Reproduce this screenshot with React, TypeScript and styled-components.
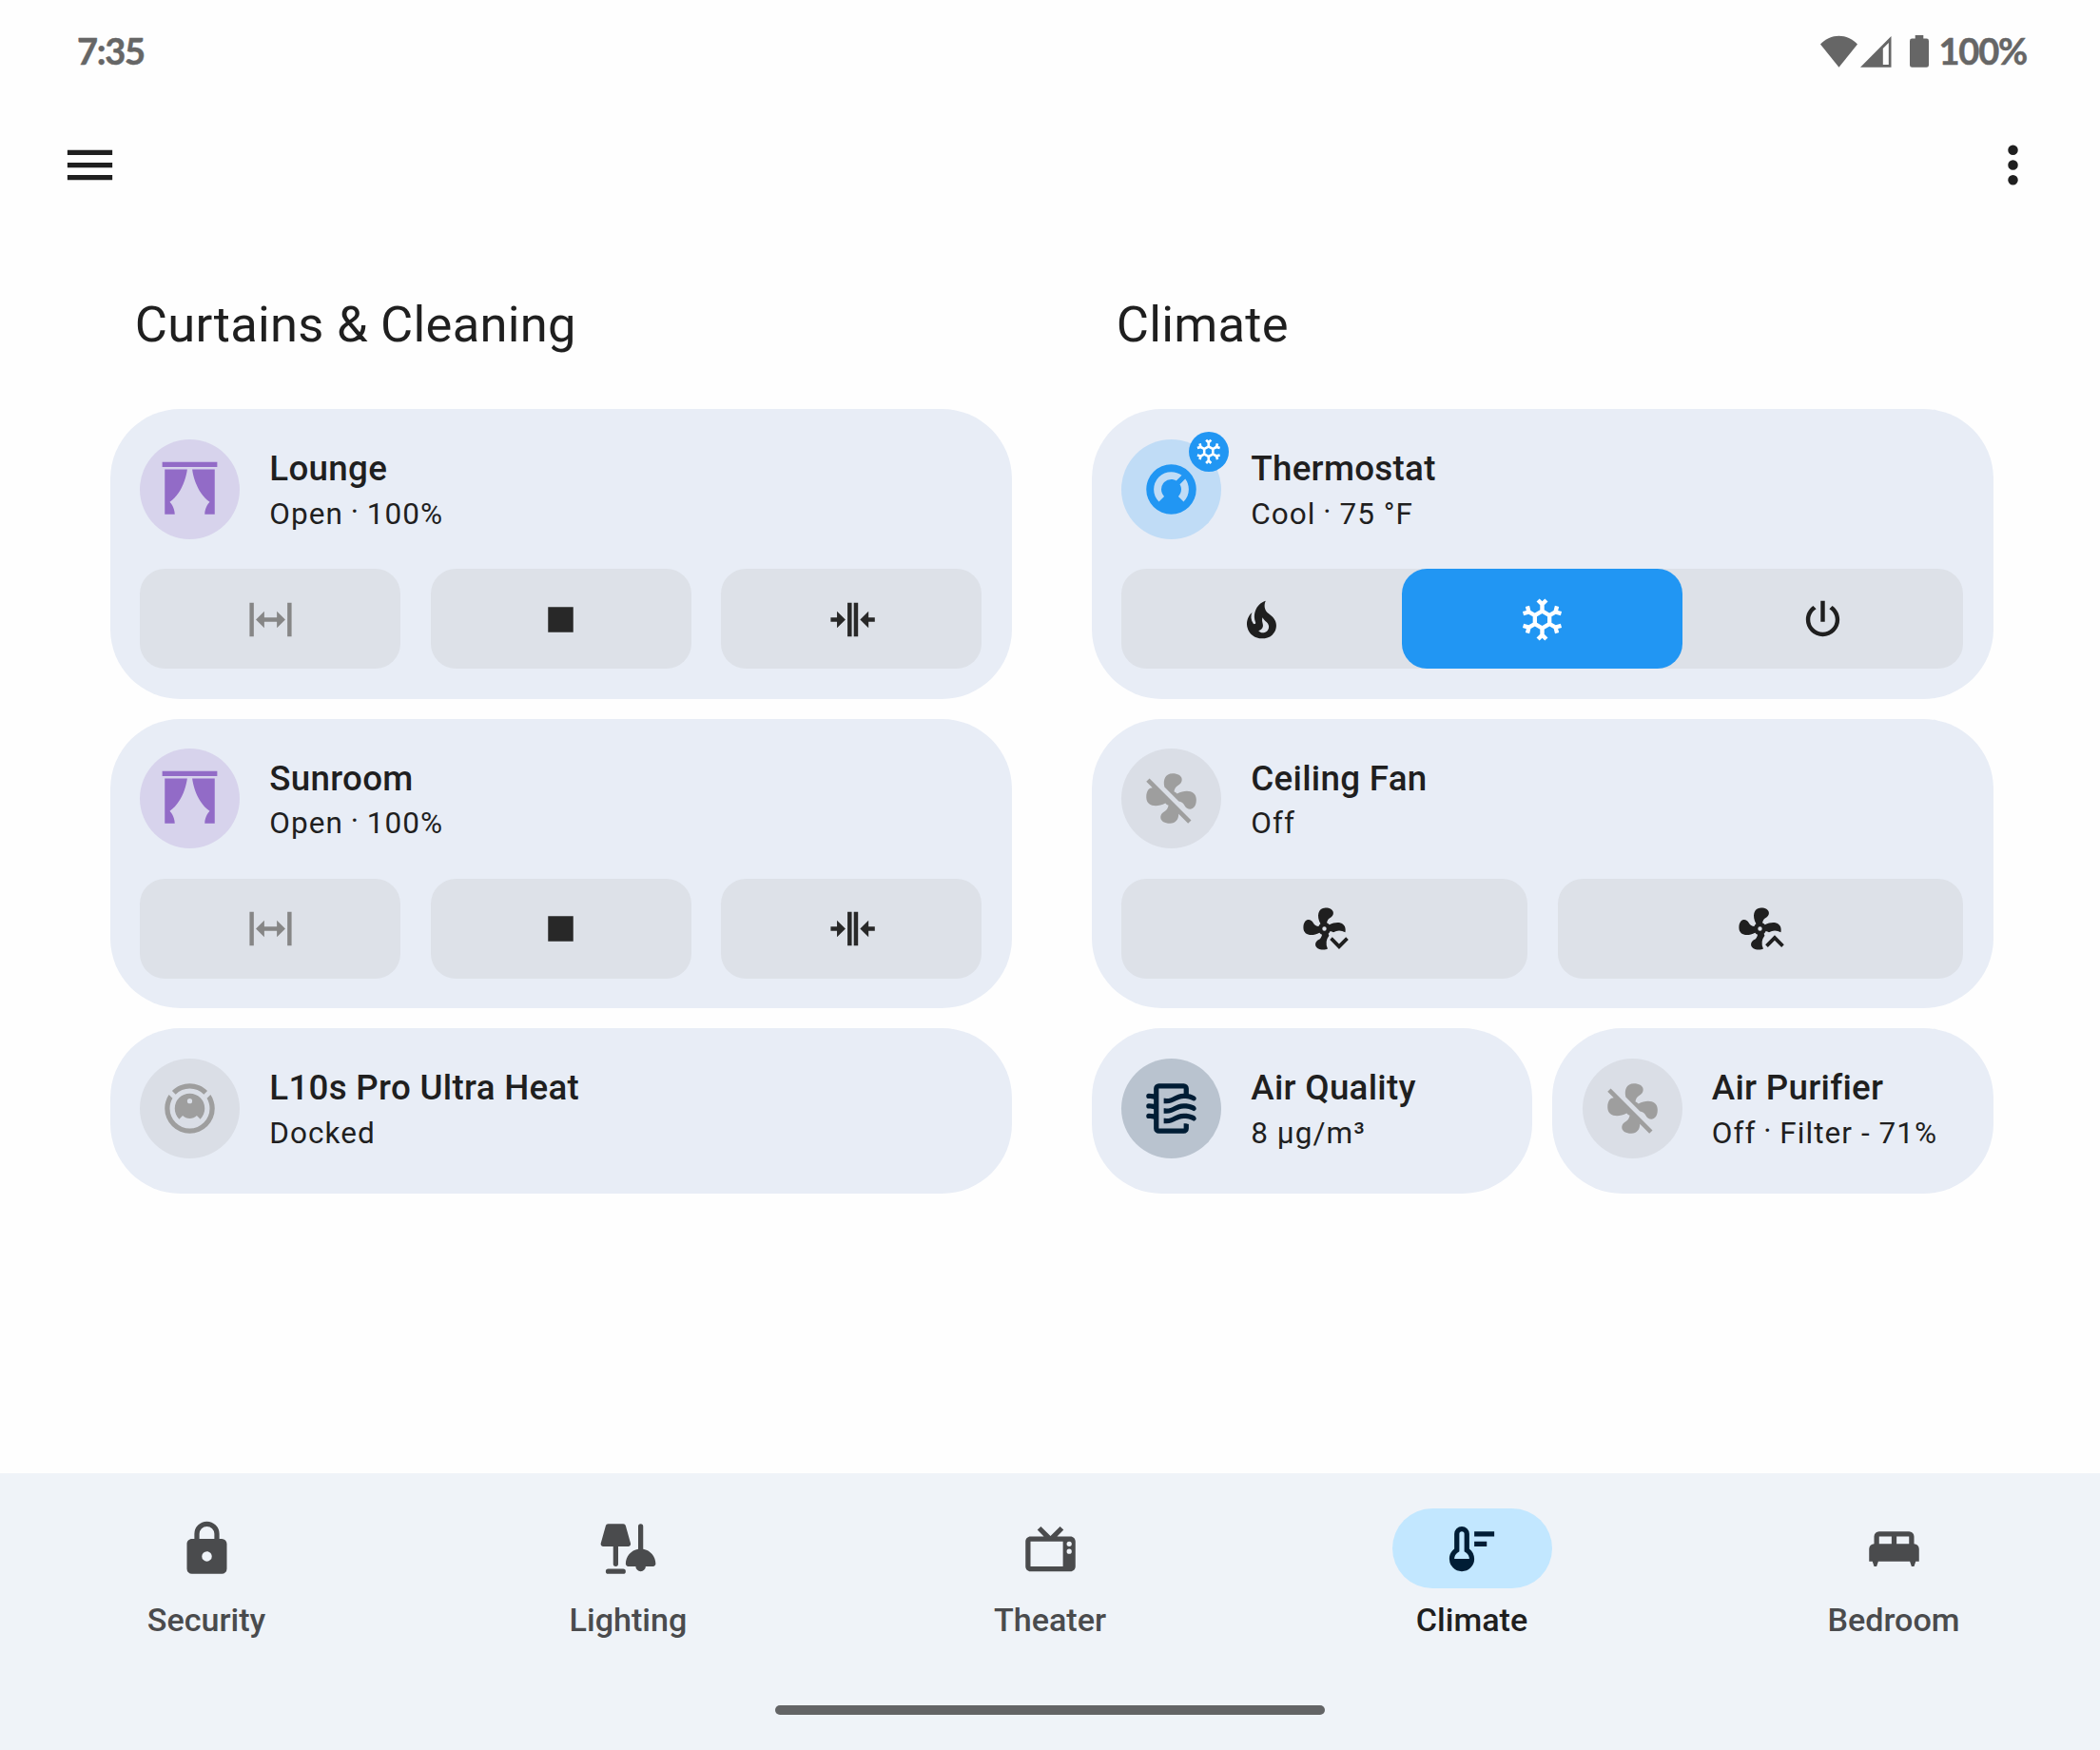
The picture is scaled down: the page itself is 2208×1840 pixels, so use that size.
import React from 'react';
import styled, { createGlobalStyle } from 'styled-components';

const GlobalStyle = createGlobalStyle`
  * { box-sizing: border-box; }
  html, body { margin: 0; padding: 0; background: #fefefe; }
  body { font-family: Roboto, "Noto Sans", sans-serif; color: #1f1f1f; }
  button { font: inherit; color: inherit; border: 0; padding: 0; margin: 0; background: none; }
`;

/* ---------- icon paths, 24 x 24 grid ---------- */

const icons = {
  menu: 'M3,6H21V8H3V6M3,11H21V13H3V11M3,16H21V18H3V16Z',
  dots: 'M12,16A2,2 0 0,1 14,18A2,2 0 0,1 12,20A2,2 0 0,1 10,18A2,2 0 0,1 12,16M12,10A2,2 0 0,1 14,12A2,2 0 0,1 12,14A2,2 0 0,1 10,12A2,2 0 0,1 12,10M12,4A2,2 0 0,1 14,6A2,2 0 0,1 12,8A2,2 0 0,1 10,6A2,2 0 0,1 12,4Z',
  curtains: 'M23 3H1V1H23V3M2 22H6C6 19 4 17 4 17C10 13 11 4 11 4H2V22M22 4H13C13 4 14 13 20 17C20 17 18 19 18 22H22V4Z',
  expand: 'M9,11H15V8L19,12L15,16V13H9V16L5,12L9,8V11M2,20V4H4V20H2M20,20V4H22V20H20Z',
  collapse: 'M13,20V4H15.03V20H13M10,20V4H12.03V20H10M5,8L9.03,12L5,16V13H2V11H5V8M20,16L16,12L20,8V11H23V13H20V16Z',
  stop: 'M18,18H6V6H18V18Z',
  fire: 'M17.66 11.2C17.43 10.9 17.15 10.64 16.89 10.38C16.22 9.78 15.46 9.35 14.82 8.72C13.33 7.26 13 4.85 13.95 3C13 3.23 12.17 3.75 11.46 4.32C8.87 6.4 7.85 10.07 9.07 13.22C9.11 13.32 9.15 13.42 9.15 13.55C9.15 13.77 9 13.97 8.8 14.05C8.57 14.15 8.33 14.09 8.14 13.93C8.08 13.88 8.04 13.83 8 13.76C6.87 12.33 6.69 10.28 7.45 8.64C5.78 10 4.87 12.3 5 14.47C5.06 14.97 5.12 15.47 5.29 15.97C5.43 16.57 5.7 17.17 6 17.7C7.08 19.43 8.95 20.67 10.96 20.92C13.1 21.19 15.39 20.8 17.03 19.32C18.86 17.66 19.5 15 18.56 12.72L18.43 12.46C18.22 12 17.66 11.2 17.66 11.2M14.5 17.5C14.22 17.74 13.76 18 13.4 18.1C12.28 18.5 11.16 17.94 10.5 17.28C11.69 17 12.4 16.12 12.61 15.23C12.78 14.43 12.46 13.77 12.33 13C12.21 12.26 12.23 11.63 12.5 10.94C12.69 11.32 12.89 11.7 13.13 12C13.9 13 15.11 13.44 15.37 14.8C15.41 14.94 15.43 15.08 15.43 15.23C15.46 16.05 15.1 16.95 14.5 17.5H14.5Z',
  snowflake: 'M20.79,13.95L18.46,14.57L16.46,13.44V10.56L18.46,9.43L20.79,10.05L21.31,8.12L19.54,7.65L20,5.88L18.07,5.36L17.45,7.69L15.45,8.82L13,7.38V5.12L14.71,3.41L13.29,2L12,3.29L10.71,2L9.29,3.41L11,5.12V7.38L8.5,8.82L6.5,7.69L5.92,5.36L4,5.88L4.47,7.65L2.7,8.12L3.22,10.05L5.55,9.43L7.55,10.56V13.45L5.55,14.58L3.22,13.96L2.7,15.89L4.47,16.36L4,18.12L5.93,18.64L6.55,16.31L8.55,15.18L11,16.62V18.88L9.29,20.59L10.71,22L12,20.71L13.29,22L14.7,20.59L13,18.88V16.62L15.5,15.17L17.5,16.3L18.12,18.63L20,18.12L19.53,16.35L21.3,15.88L20.79,13.95M9.5,10.56L12,9.11L14.5,10.56V13.44L12,14.89L9.5,13.44V10.56Z',
  power: 'M16.56,5.44L15.11,6.89C16.84,7.94 18,9.83 18,12A6,6 0 0,1 12,18A6,6 0 0,1 6,12C6,9.83 7.16,7.94 8.88,6.88L7.44,5.44C5.36,6.88 4,9.28 4,12A8,8 0 0,0 12,20A8,8 0 0,0 20,12C20,9.28 18.64,6.88 16.56,5.44M13,3H11V13H13',
  thermostat: 'M16.95,16.95L14.83,14.83C15.55,14.1 16,13.1 16,12C16,11.26 15.79,10.57 15.43,10L17.6,7.81C18.5,9 19,10.43 19,12C19,13.93 18.22,15.68 16.95,16.95M12,5C13.57,5 15,5.5 16.19,6.4L14,8.56C13.43,8.21 12.74,8 12,8A4,4 0 0,0 8,12C8,13.1 8.45,14.1 9.17,14.83L7.05,16.95C5.78,15.68 5,13.93 5,12A7,7 0 0,1 12,5M12,2A10,10 0 0,0 2,12A10,10 0 0,0 12,22A10,10 0 0,0 22,12A10,10 0 0,0 12,2Z',
  fanOff: 'M12.5,2C9.64,2 8.57,4.55 9.29,7.47L15,13.16C15.87,13.37 16.81,13.81 17.28,14.73C18.46,17.1 22.03,17 22.03,12.5C22.03,8.92 18.05,8.13 14.35,10.13C14.03,9.73 13.61,9.42 13.13,9.22C13.32,8.29 13.76,7.24 14.75,6.75C17.11,5.57 17,2 12.5,2M3.28,4L2,5.27L4.47,7.73C3.22,7.74 2,8.87 2,11.5C2,15.07 5.96,15.85 9.65,13.87C9.97,14.27 10.4,14.59 10.89,14.79C10.69,15.71 10.25,16.75 9.27,17.24C6.91,18.42 7,22 11.5,22C13.8,22 14.94,20.36 14.94,18.21L18.73,22L20,20.72L3.28,4Z',
  fanDown: 'M12,11A1,1 0 0,0 11,12A1,1 0 0,0 12,13A1,1 0 0,0 13,12A1,1 0 0,0 12,11M12.5,2C17,2 17.11,5.57 14.75,6.75C13.76,7.24 13.32,8.29 13.13,9.22C13.61,9.42 14.03,9.73 14.35,10.13C18.05,8.13 22.03,8.92 22.03,12.5C22.03,12.95 22,13.35 21.92,13.75A6,6 0 0,0 16.3,13.65C15.8,13.37 15.3,13.2 14.79,13.11C14.59,13.59 14.28,14 13.88,14.34C14,14.6 14.1,14.9 14.22,15.3A6,6 0 0,0 13.55,21.5C13.05,21.82 12.4,22 11.5,22C7,22 6.91,18.42 9.27,17.24C10.25,16.75 10.69,15.71 10.89,14.79C10.4,14.59 9.97,14.27 9.65,13.87C5.96,15.85 2,15.07 2,11.5C2,7 5.56,6.89 6.74,9.26C7.24,10.25 8.29,10.68 9.22,10.87C9.41,10.39 9.73,9.97 10.14,9.65C8.15,5.96 8.94,2 12.5,2M14.6,17.2L15.76,15.98L19,19.2L22.26,15.98L23.45,17.2L19,21.75Z',
  fanUp: 'M12,11A1,1 0 0,0 11,12A1,1 0 0,0 12,13A1,1 0 0,0 13,12A1,1 0 0,0 12,11M12.5,2C17,2 17.11,5.57 14.75,6.75C13.76,7.24 13.32,8.29 13.13,9.22C13.61,9.42 14.03,9.73 14.35,10.13C18.05,8.13 22.03,8.92 22.03,12.5C22.03,12.95 22,13.35 21.92,13.75A6,6 0 0,0 16.3,13.65C15.8,13.37 15.3,13.2 14.79,13.11C14.59,13.59 14.28,14 13.88,14.34C14,14.6 14.1,14.9 14.22,15.3A6,6 0 0,0 13.55,21.5C13.05,21.82 12.4,22 11.5,22C7,22 6.91,18.42 9.27,17.24C10.25,16.75 10.69,15.71 10.89,14.79C10.4,14.59 9.97,14.27 9.65,13.87C5.96,15.85 2,15.07 2,11.5C2,7 5.56,6.89 6.74,9.26C7.24,10.25 8.29,10.68 9.22,10.87C9.41,10.39 9.73,9.97 10.14,9.65C8.15,5.96 8.94,2 12.5,2M14.55,19.6L15.74,20.85L19,17.6L22.26,20.85L23.45,19.6L19,15Z',
  vacuum: 'M12,2C14.65,2 17.19,3.06 19.07,4.93L17.65,6.35C16.15,4.85 14.12,4 12,4C9.88,4 7.84,4.84 6.35,6.35L4.93,4.93C6.81,3.06 9.35,2 12,2M3.66,6.5L5.11,7.94C4.39,9.17 4,10.57 4,12A8,8 0 0,0 12,20A8,8 0 0,0 20,12C20,10.57 19.61,9.17 18.88,7.94L20.34,6.5C21.42,8.12 22,10.04 22,12A10,10 0 0,1 12,22A10,10 0 0,1 2,12C2,10.04 2.58,8.12 3.66,6.5M12,6A6,6 0 0,1 18,12C18,13.59 17.37,15.12 16.24,16.24L14.83,14.83C14.08,15.58 13.06,16 12,16C10.94,16 9.92,15.58 9.17,14.83L7.76,16.24C6.63,15.12 6,13.59 6,12A6,6 0 0,1 12,6M12,8A1,1 0 0,0 11,9A1,1 0 0,0 12,10A1,1 0 0,0 13,9A1,1 0 0,0 12,8Z',
  airFilter: 'M19,18.31V20A2,2 0 0,1 17,22H7A2,2 0 0,1 5,20V16.3C4.54,16.12 3.95,16 3,16A1,1 0 0,1 2,15A1,1 0 0,1 3,14C3.82,14 4.47,14.08 5,14.21V12.3C4.54,12.12 3.95,12 3,12A1,1 0 0,1 2,11A1,1 0 0,1 3,10C3.82,10 4.47,10.08 5,10.21V8.3C4.54,8.12 3.95,8 3,8A1,1 0 0,1 2,7A1,1 0 0,1 3,6C3.82,6 4.47,6.08 5,6.21V4A2,2 0 0,1 7,2H17A2,2 0 0,1 19,4V6.16C20.78,6.47 21.54,7.13 21.71,7.29C22.1,7.68 22.1,8.32 21.71,8.71C21.32,9.1 20.8,9.09 20.29,8.71V8.71C20.29,8.71 19.25,8 17,8C15.74,8 14.91,8.41 13.95,8.9C12.91,9.41 11.74,10 10,10C9.64,10 9.31,10 9,9.96V7.95C9.3,8 9.63,8 10,8C11.26,8 12.09,7.59 13.05,7.11C14.09,6.59 15.27,6 17,6V4H7V20H17V18C18.5,18 18.97,18.29 19,18.31M17,10C15.27,10 14.09,10.59 13.05,11.11C12.09,11.59 11.26,12 10,12C9.63,12 9.3,12 9,11.95V13.96C9.31,14 9.64,14 10,14C11.74,14 12.91,13.41 13.95,12.9C14.91,12.42 15.74,12 17,12C19.25,12 20.29,12.71 20.29,12.71V12.71C20.8,13.1 21.32,13.1 21.71,12.71C22.1,12.32 22.1,11.69 21.71,11.29C21.5,11.08 20.25,10 17,10M17,14C15.27,14 14.09,14.59 13.05,15.11C12.09,15.59 11.26,16 10,16C9.63,16 9.3,16 9,15.95V17.96C9.31,18 9.64,18 10,18C11.74,18 12.91,17.41 13.95,16.9C14.91,16.42 15.74,16 17,16C19.25,16 20.29,16.71 20.29,16.71V16.71C20.8,17.1 21.32,17.1 21.71,16.71C22.1,16.32 22.1,15.69 21.71,15.29C21.5,15.08 20.25,14 17,14Z',
  lock: 'M12,17A2,2 0 0,0 14,15C14,13.89 13.1,13 12,13A2,2 0 0,0 10,15A2,2 0 0,0 12,17M18,8A2,2 0 0,1 20,10V20A2,2 0 0,1 18,22H6A2,2 0 0,1 4,20V10C4,8.89 4.9,8 6,8H7V6A5,5 0 0,1 12,1A5,5 0 0,1 17,6V8H18M12,3A3,3 0 0,0 9,6V8H15V6A3,3 0 0,0 12,3Z',
  lamps: 'M4,2H10C10.5,2 10.88,2.3 11,2.78L12.97,9.8C13.13,10.42 12.65,11 12,11H8V18A1,1 0 0,1 6,18V11H2C1.35,11 0.87,10.42 1.03,9.8L3,2.78C3.12,2.3 3.5,2 4,2M4,20H10A1,1 0 0,1 10,22H4A1,1 0 0,1 4,20M17,2A1,1 0 0,1 18,3V12.08C20.84,12.56 23,15.03 23,18C23,18.55 22.55,19 22,19H19A2,2 0 0,1 15,19H12C11.45,19 11,18.55 11,18C11,15.03 13.16,12.56 16,12.08V3A1,1 0 0,1 17,2Z',
  tv: 'M8.16,3L6.75,4.41L9.34,7H4C2.89,7 2,7.89 2,9V19C2,20.11 2.89,21 4,21H20C21.11,21 22,20.11 22,19V9C22,7.89 21.11,7 20,7H14.66L17.25,4.41L15.84,3L12,6.84L8.16,3M4,9H17V19H4V9M19.5,9A1,1 0 0,1 20.5,10A1,1 0 0,1 19.5,11A1,1 0 0,1 18.5,10A1,1 0 0,1 19.5,9M19.5,12A1,1 0 0,1 20.5,13A1,1 0 0,1 19.5,14A1,1 0 0,1 18.5,13A1,1 0 0,1 19.5,12Z',
  thermometer: 'M13,5H21V7H13V5M13,9H18V11H13V9M11,12V6A3,3 0 0,0 5,6V12C3.79,12.91 3,14.37 3,16A5,5 0 0,0 13,16C13,14.37 12.21,12.91 11,12M5,16C5,15.06 5.45,14.16 6.2,13.6L7,13V6A1,1 0 0,1 9,6V13L9.8,13.6C10.55,14.17 11,15.06 11,16H5Z',
  bed: 'M20,10V7A2,2 0 0,0 18,5H6A2,2 0 0,0 4,7V10A2,2 0 0,0 2,12V17H3.33L4,19H5L5.67,17H18.33L19,19H20L20.67,17H22V12A2,2 0 0,0 20,10M11,10H6V7H11M18,10H13V7H18',
};

type IconName = keyof typeof icons;

const Glyph = styled.svg<{ $size: number }>`
  display: block;
  flex: none;
  width: ${(p) => p.$size}px;
  height: ${(p) => p.$size}px;
  fill: currentColor;
`;

const Icon = ({ name, size = 63 }: { name: IconName; size?: number }) => (
  <Glyph $size={size} viewBox="0 0 24 24" aria-hidden>
    <path fillRule="evenodd" d={icons[name]} />
  </Glyph>
);

/* ---------- page frame ---------- */

const Screen = styled.div`
  display: flex;
  flex-direction: column;
  width: 2208px;
  height: 1840px;
  overflow: hidden;
  background: #fefefe;
`;

const StatusBar = styled.header`
  display: flex;
  align-items: center;
  justify-content: space-between;
  height: 108px;
  padding: 0 77px 0 81px;
  color: #666;
  font: 700 38px/44px Lato, sans-serif;
`;

const Clock = styled.span`
  padding-bottom: 2px;
  letter-spacing: -1.3px;
  -webkit-text-stroke: 0.5px currentColor;
`;

const StatusIcons = styled.div`
  display: flex;
  align-items: center;
`;

const StatusGlyph = styled.svg<{ $gap: number }>`
  display: block;
  height: 34px;
  fill: currentColor;
  margin-right: ${(p) => p.$gap}px;
`;

const Battery = styled.span`
  padding-bottom: 2px;
  letter-spacing: -1.2px;
  -webkit-text-stroke: 0.5px currentColor;
`;

const AppBar = styled.div`
  display: flex;
  align-items: center;
  justify-content: space-between;
  height: 131px;
  padding: 0 60px 0 63px;
`;

const IconButton = styled.button`
  display: block;
`;

const Main = styled.main`
  flex: 1;
  display: flex;
  gap: 84px;
  padding: 60px 112.25px 0 115.75px;
`;

const Section = styled.section`
  display: flex;
  flex-direction: column;
  width: 948px;
`;

const SectionTitle = styled.h2`
  margin: 0;
  height: 131.25px;
  padding: 10px 26px 0;
  font-weight: 400;
  font-size: 52.5px;
  line-height: 64px;
  letter-spacing: 0.26px;
  white-space: nowrap;
`;

const Stack = styled.div`
  display: flex;
  flex-direction: column;
  gap: 21px;
`;

const Split = styled.div`
  display: grid;
  grid-template-columns: 1fr 1fr;
  gap: 21px;
`;

/* ---------- tiles ---------- */

const Card = styled.article<{ $compact?: boolean }>`
  display: flex;
  flex-direction: column;
  gap: 31.5px;
  height: ${(p) => (p.$compact ? 173.5 : 304.5)}px;
  padding: 31.5px;
  border-radius: 73.5px;
  background: #e8edf6;
`;

const CardHead = styled.div`
  display: flex;
  align-items: center;
  gap: 31px;
  height: 105px;
`;

const Avatar = styled.div<{ $fg: string; $bg: string }>`
  position: relative;
  display: grid;
  place-items: center;
  flex: none;
  width: 105px;
  height: 105px;
  border-radius: 50%;
  color: ${(p) => p.$fg};
  background: ${(p) => p.$bg};
`;

const Badge = styled.span`
  position: absolute;
  top: -7.875px;
  right: -7.875px;
  display: grid;
  place-items: center;
  width: 42px;
  height: 42px;
  border-radius: 50%;
  color: #fff;
  background: #2196f3;
`;

const Labels = styled.div`
  display: flex;
  flex-direction: column;
  white-space: nowrap;
`;

const Name = styled.span`
  font-weight: 500;
  font-size: 36.75px;
  line-height: 52.5px;
  letter-spacing: 0.29px;
`;

const State = styled.span`
  font-size: 31.5px;
  line-height: 42px;
  letter-spacing: 1.05px;
`;

const ButtonRow = styled.div`
  display: flex;
  gap: 31.5px;
`;

const controlColors = { normal: '#1f1f1f', soft: '#282828', disabled: '#868686' };

const ControlButton = styled.button<{ $tone?: keyof typeof controlColors }>`
  display: grid;
  place-items: center;
  flex: 1;
  height: 105px;
  padding-top: 0.6px;
  border-radius: 26.25px;
  background: #dde1e8;
  color: ${(p) => controlColors[p.$tone ?? 'normal']};
`;

const Segmented = styled.div`
  display: flex;
  height: 105px;
  border-radius: 26.25px;
  background: #dde1e8;
`;

const Segment = styled.button<{ $active?: boolean }>`
  display: grid;
  place-items: center;
  flex: 1;
  padding-top: 0.6px;
  border-radius: 26.25px;
  color: ${(p) => (p.$active ? '#fff' : '#1f1f1f')};
  background: ${(p) => (p.$active ? '#2196f3' : 'transparent')};
`;

const tones = {
  purple: { fg: '#926bc7', bg: '#d7d3ec' },
  blue: { fg: '#2196f3', bg: '#c0dcf6' },
  grey: { fg: '#9e9e9e', bg: '#dadee6' },
  navy: { fg: '#001d35', bg: '#b9c3cf' },
};

const Separator = styled.span`
  position: relative;
  top: -2px;
  margin: 0 -1.1px;
`;

type TileProps = {
  icon: IconName;
  tone: keyof typeof tones;
  name: string;
  state: string[];
  badge?: IconName;
  children?: React.ReactNode;
};

const Tile = ({ icon, tone, name, state, badge, children }: TileProps) => (
  <Card $compact={!children}>
    <CardHead>
      <Avatar $fg={tones[tone].fg} $bg={tones[tone].bg}>
        <Icon name={icon} />
        {badge && (
          <Badge>
            <Icon name={badge} size={31.5} />
          </Badge>
        )}
      </Avatar>
      <Labels>
        <Name>{name}</Name>
        <State>
          {state.map((part, i) => (
            <React.Fragment key={part}>
              {i > 0 && <> <Separator>·</Separator> </>}
              {part}
            </React.Fragment>
          ))}
        </State>
      </Labels>
    </CardHead>
    {children}
  </Card>
);

const CONTROL_ICON = 53;

const CoverControls = () => (
  <ButtonRow>
    <ControlButton $tone="disabled"><Icon name="expand" size={CONTROL_ICON} /></ControlButton>
    <ControlButton $tone="soft"><Icon name="stop" size={CONTROL_ICON} /></ControlButton>
    <ControlButton $tone="soft"><Icon name="collapse" size={CONTROL_ICON} /></ControlButton>
  </ButtonRow>
);

/* ---------- bottom navigation ---------- */

const BottomBar = styled.nav`
  display: flex;
  flex-direction: column;
  align-items: center;
  height: 291px;
  background: #eff3f8;
`;

const Tabs = styled.div`
  display: flex;
  gap: 9.5px;
  width: 100%;
  height: 244px;
  padding-top: 37px;
`;

const Tab = styled.button<{ $active?: boolean }>`
  display: flex;
  flex-direction: column;
  align-items: center;
  justify-content: flex-start;
  flex: 1;
  color: ${(p) => (p.$active ? '#1f1f1f' : '#4a4b4d')};
`;

const Pill = styled.span<{ $active?: boolean }>`
  display: grid;
  place-items: center;
  width: 168px;
  height: 84px;
  border-radius: 42px;
  color: ${(p) => (p.$active ? '#001d35' : 'inherit')};
  background: ${(p) => (p.$active ? '#c2e7ff' : 'transparent')};
`;

const TabLabel = styled.span`
  margin-top: 12px;
  font-weight: 500;
  font-size: 34.125px;
  line-height: 42px;
`;

const HomeHandle = styled.div`
  width: 578px;
  height: 10px;
  border-radius: 5px;
  background: #636466;
`;

const tabs: { icon: IconName; label: string; active?: boolean }[] = [
  { icon: 'lock', label: 'Security' },
  { icon: 'lamps', label: 'Lighting' },
  { icon: 'tv', label: 'Theater' },
  { icon: 'thermometer', label: 'Climate', active: true },
  { icon: 'bed', label: 'Bedroom' },
];

export default function App() {
  return (
    <Screen>
      <GlobalStyle />
      <StatusBar>
        <Clock>7:35</Clock>
        <StatusIcons>
          <StatusGlyph $gap={3.5} width="39" viewBox="0 0 39 34">
            <path d="M0,9.6C5.5,3.6 12.2,0.8 19.5,0.8S33.5,3.6 39,9.6L19.5,33.8Z" />
          </StatusGlyph>
          <StatusGlyph $gap={19} width="32.5" viewBox="0 0 32.5 34">
            <path fillRule="evenodd" d="M32.5,1V33.8H0ZM29.8,7.9L23.8,14V31H29.8Z" />
          </StatusGlyph>
          <StatusGlyph $gap={11} width="20" viewBox="0 0 20 34">
            <path d="M5.7,0H14.3V3.5H17.6A2.4,2.4 0 0 1 20,5.9V31.4A2.4,2.4 0 0 1 17.6,33.8H2.4A2.4,2.4 0 0 1 0,31.4V5.9A2.4,2.4 0 0 1 2.4,3.5H5.7Z" />
          </StatusGlyph>
          <Battery>100%</Battery>
        </StatusIcons>
      </StatusBar>

      <AppBar>
        <IconButton aria-label="Menu"><Icon name="menu" /></IconButton>
        <IconButton aria-label="More"><Icon name="dots" /></IconButton>
      </AppBar>

      <Main>
        <Section>
          <SectionTitle>Curtains &amp; Cleaning</SectionTitle>
          <Stack>
            <Tile icon="curtains" tone="purple" name="Lounge" state={['Open', '100%']}>
              <CoverControls />
            </Tile>
            <Tile icon="curtains" tone="purple" name="Sunroom" state={['Open', '100%']}>
              <CoverControls />
            </Tile>
            <Tile icon="vacuum" tone="grey" name="L10s Pro Ultra Heat" state={['Docked']} />
          </Stack>
        </Section>

        <Section>
          <SectionTitle>Climate</SectionTitle>
          <Stack>
            <Tile icon="thermostat" tone="blue" badge="snowflake" name="Thermostat" state={['Cool', '75 °F']}>
              <Segmented>
                <Segment><Icon name="fire" size={CONTROL_ICON} /></Segment>
                <Segment $active><Icon name="snowflake" size={CONTROL_ICON} /></Segment>
                <Segment><Icon name="power" size={CONTROL_ICON} /></Segment>
              </Segmented>
            </Tile>
            <Tile icon="fanOff" tone="grey" name="Ceiling Fan" state={['Off']}>
              <ButtonRow>
                <ControlButton><Icon name="fanDown" size={CONTROL_ICON} /></ControlButton>
                <ControlButton><Icon name="fanUp" size={CONTROL_ICON} /></ControlButton>
              </ButtonRow>
            </Tile>
            <Split>
              <Tile icon="airFilter" tone="navy" name="Air Quality" state={['8 µg/m³']} />
              <Tile icon="fanOff" tone="grey" name="Air Purifier" state={['Off', 'Filter - 71%']} />
            </Split>
          </Stack>
        </Section>
      </Main>

      <BottomBar>
        <Tabs>
          {tabs.map((t) => (
            <Tab key={t.label} $active={t.active}>
              <Pill $active={t.active}><Icon name={t.icon} /></Pill>
              <TabLabel>{t.label}</TabLabel>
            </Tab>
          ))}
        </Tabs>
        <HomeHandle />
      </BottomBar>
    </Screen>
  );
}
